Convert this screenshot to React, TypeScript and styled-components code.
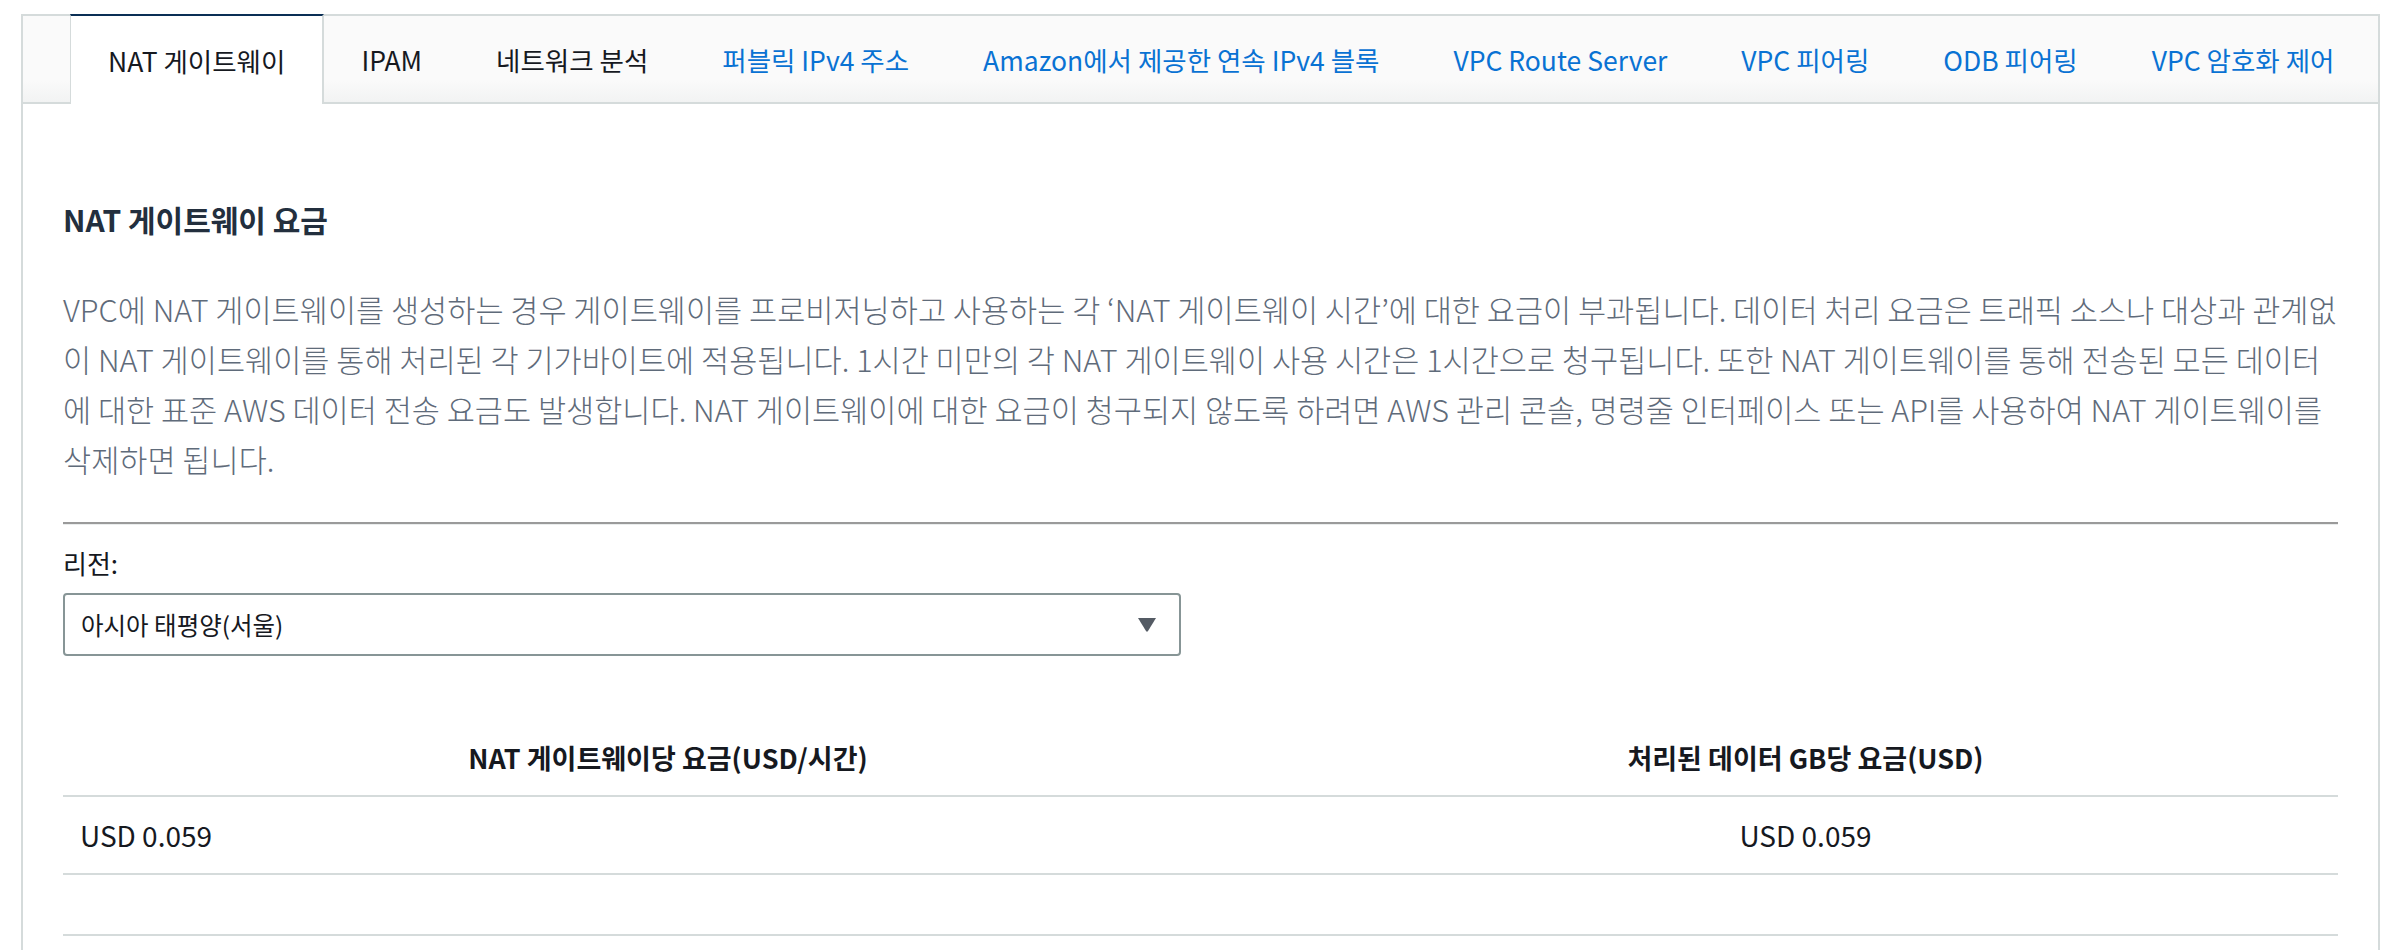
import styled, { createGlobalStyle } from 'styled-components'

const GlobalStyle = createGlobalStyle`
  html, body {
    margin: 0;
    padding: 0;
    background: #ffffff;
  }
  body {
    font-family: 'Noto Sans CJK KR', 'Noto Sans', sans-serif;
    color: #16191f;
  }
`

const Page = styled.div`
  padding: 14px 16px 0 21px;
`

const Panel = styled.div`
  border: 2px solid #d5dbdb;
  border-bottom: none;
  min-height: 934px;
`

const TabBar = styled.div`
  display: flex;
  height: 86px;
  padding-left: 47px;
  background: linear-gradient(#fafafa 0%, #fafafa 75%, #f2f3f3 100%);
  border-bottom: 2px solid #d5dbdb;
`

const Tab = styled.div<{ $active?: boolean; $link?: boolean }>`
  display: flex;
  align-items: center;
  padding: 0 37px;
  font-size: 26.5px;
  white-space: nowrap;
  color: ${(p) => (p.$link ? '#0972d3' : '#16191f')};
  ${(p) =>
    p.$active &&
    `
    background: #ffffff;
    border-top: 2px solid #0a2f55;
    border-left: 1px solid #d5dbdb;
    border-right: 2px solid #d5dbdb;
    margin-top: -2px;
    margin-bottom: -2px;
  `}
`

const Content = styled.div`
  padding: 96px 40px 0;
`

const Heading = styled.h2`
  margin: 0;
  font-size: 30px;
  line-height: 38px;
  font-weight: 700;
  color: #232f3e;
`

const Description = styled.p`
  margin: 46px 0 38px;
  font-size: 30.6px;
  line-height: 50px;
  font-weight: 300;
  color: #5f6b7a;
  white-space: nowrap;
`

const Divider = styled.hr`
  margin: 0;
  border: none;
  border-top: 2px solid #9a9a9a;
  border-bottom: 1px solid #eaeded;
`

const Label = styled.div`
  margin-top: 21px;
  font-size: 26px;
  line-height: 34px;
`

const Select = styled.div`
  margin-top: 13px;
  width: 1118px;
  height: 63px;
  box-sizing: border-box;
  border: 2px solid #879596;
  border-radius: 4px;
  display: flex;
  align-items: center;
  justify-content: space-between;
  padding: 0 22px 0 16px;
  font-size: 24.5px;
`

const Caret = styled.svg`
  width: 20px;
  height: 15px;
  fill: #545b64;
`

const Table = styled.div`
  margin-top: 63px;
  display: grid;
  grid-template-columns: 1210px 1fr;
`

const Cell = styled.div<{ $align?: 'left' | 'center'; $head?: boolean; $h?: number }>`
  height: ${(p) => p.$h ?? 76}px;
  display: flex;
  align-items: center;
  justify-content: ${(p) => (p.$align === 'left' ? 'flex-start' : 'center')};
  padding: 0 17px;
  border-bottom: 2px solid #d5dbdb;
  font-size: ${(p) => (p.$head ? 27 : 28)}px;
  font-weight: ${(p) => (p.$head ? 700 : 400)};
  color: #16191f;
`

const tabs = [
  { label: 'NAT 게이트웨이', active: true },
  { label: 'IPAM' },
  { label: '네트워크 분석' },
  { label: '퍼블릭 IPv4 주소', link: true },
  { label: 'Amazon에서 제공한 연속 IPv4 블록', link: true },
  { label: 'VPC Route Server', link: true },
  { label: 'VPC 피어링', link: true },
  { label: 'ODB 피어링', link: true },
  { label: 'VPC 암호화 제어', link: true },
]

// the reference wraps at these points; keep them fixed
const descriptionLines = [
  'VPC에 NAT 게이트웨이를 생성하는 경우 게이트웨이를 프로비저닝하고 사용하는 각 ‘NAT 게이트웨이 시간’에 대한 요금이 부과됩니다. 데이터 처리 요금은 트래픽 소스나 대상과 관계없',
  '이 NAT 게이트웨이를 통해 처리된 각 기가바이트에 적용됩니다. 1시간 미만의 각 NAT 게이트웨이 사용 시간은 1시간으로 청구됩니다. 또한 NAT 게이트웨이를 통해 전송된 모든 데이터',
  '에 대한 표준 AWS 데이터 전송 요금도 발생합니다. NAT 게이트웨이에 대한 요금이 청구되지 않도록 하려면 AWS 관리 콘솔, 명령줄 인터페이스 또는 API를 사용하여 NAT 게이트웨이를',
  '삭제하면 됩니다.',
]

export default function App() {
  return (
    <>
      <GlobalStyle />
      <Page>
        <Panel>
          <TabBar>
            {tabs.map((t) => (
              <Tab key={t.label} $active={t.active} $link={t.link}>
                {t.label}
              </Tab>
            ))}
          </TabBar>
          <Content>
            <Heading>NAT 게이트웨이 요금</Heading>
            <Description>
              {descriptionLines.map((line, i) => (
                <span key={i}>
                  {line}
                  {i < descriptionLines.length - 1 && <br />}
                </span>
              ))}
            </Description>
            <Divider />
            <Label>리전:</Label>
            <Select>
              <span>아시아 태평양(서울)</span>
              <Caret viewBox="0 0 20 15">
                <path d="M1 1 H19 L11 14 Q10 15.5 9 14 Z" />
              </Caret>
            </Select>
            <Table>
              <Cell $head>NAT 게이트웨이당 요금(USD/시간)</Cell>
              <Cell $head>처리된 데이터 GB당 요금(USD)</Cell>
              <Cell $align="left">USD 0.059</Cell>
              <Cell>USD 0.059</Cell>
              <Cell $h={59} />
              <Cell $h={59} />
            </Table>
          </Content>
        </Panel>
      </Page>
    </>
  )
}
